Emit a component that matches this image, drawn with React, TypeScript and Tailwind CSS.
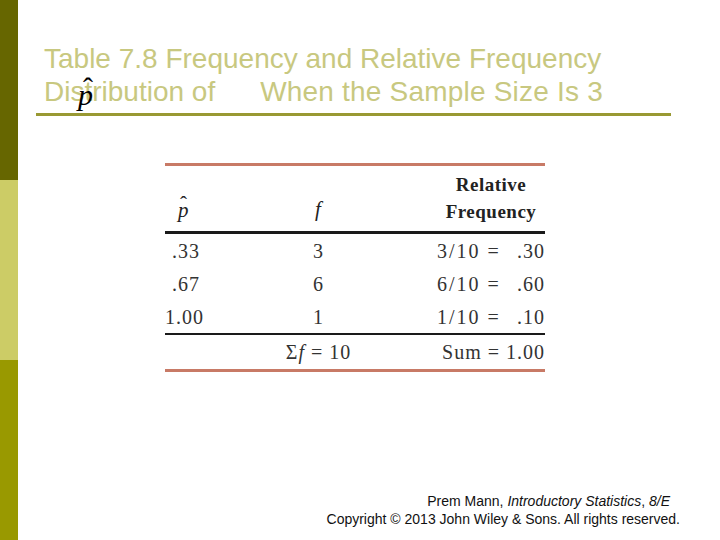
import React from 'react';

const serif = { fontFamily: '"Liberation Serif", "Times New Roman", serif' };
const sans = { fontFamily: '"Liberation Sans", Arial, sans-serif' };

function PHat({ className, hatClassName }: { className: string; hatClassName: string }) {
    return (
        <span className={`relative inline-block italic ${className}`} style={serif}>
            p
            <span className={`absolute not-italic ${hatClassName}`}>ˆ</span>
        </span>
    );
}

const rows = [
    { p: '.33', f: '3', rel: '3/10 =', val: '.30' },
    { p: '.67', f: '6', rel: '6/10 =', val: '.60' },
    { p: '1.00', f: '1', rel: '1/10 =', val: '.10' },
];

export default function App() {
    return (
        <div className="flex h-[540px] w-[720px] overflow-hidden bg-white">
            <div className="flex w-[18px] shrink-0 flex-col">
                <div className="h-[180px] bg-[#666600]" />
                <div className="h-[180px] bg-[#cccc66]" />
                <div className="h-[180px] bg-[#999900]" />
            </div>

            <div className="flex flex-1 flex-col">
                <div className="ml-[26px] mt-[42px] text-[28px] leading-[33px] text-[#c8c880]" style={sans}>
                    <div>Table 7.8 Frequency and Relative Frequency</div>
                    <div className="relative">
                        Distribution of
                        <span className="inline-block w-[45px]" />
                        <span className="tracking-[0.2px]">When the Sample Size Is 3</span>
                        <span className="absolute left-[34px] top-[5px] text-[30px] leading-none text-black">
                            <PHat className="" hatClassName="left-[5px] -top-[7px]" />
                        </span>
                    </div>
                </div>
                <div className="ml-[18px] mt-[5px] h-[3px] w-[635px] bg-[#999933]" />

                <div className="ml-[147px] mt-[47px] w-[380px] text-[20px] tracking-[1px] text-[#333]" style={serif}>
                    <div className="h-[3px] bg-[#c87a66]" />
                    <div className="flex h-[65px] items-end">
                        <div className="w-[35px] pb-[6px] pl-[13px]">
                            <PHat className="text-[21px] leading-[21px] text-[#222]" hatClassName="left-[2px] -top-[6px]" />
                        </div>
                        <div className="w-[237px] pb-[6px] text-center">
                            <span className="text-[21px] italic text-[#222]">f</span>
                        </div>
                        <div className="w-[108px] pb-[6px] text-center text-[19px] font-bold leading-[27px] tracking-[0.5px] text-[#222]">
                            <div>Relative</div>
                            <div>Frequency</div>
                        </div>
                    </div>
                    <div className="h-[3px] bg-[#1a1a1a]" />
                    {rows.map((row) => (
                        <div key={row.p} className="flex h-[33px] items-center">
                            <div className="w-[35px] text-right">{row.p}</div>
                            <div className="w-[237px] text-center">{row.f}</div>
                            <div className="flex w-[108px] justify-between">
                                <span className="tracking-[2px]">{row.rel}</span>
                                <span>{row.val}</span>
                            </div>
                        </div>
                    ))}
                    <div className="h-[2px] bg-[#1a1a1a]" />
                    <div className="flex h-[34px] items-center">
                        <div className="w-[35px]" />
                        <div className="w-[237px] text-center">
                            Σ<span className="italic">f</span> = 10
                        </div>
                        <div className="w-[108px] text-right">Sum = 1.00</div>
                    </div>
                    <div className="h-[3px] bg-[#c87a66]" />
                </div>

                <div className="mb-[12px] mr-[40px] mt-auto text-right text-[14px] leading-[18px] text-[#111]" style={sans}>
                    <div className="pr-[10px]">
                        Prem Mann, <span className="italic">Introductory Statistics</span>, <span className="italic">8/E</span>
                    </div>
                    <div>Copyright © 2013 John Wiley &amp; Sons. All rights reserved.</div>
                </div>
            </div>
        </div>
    );
}
